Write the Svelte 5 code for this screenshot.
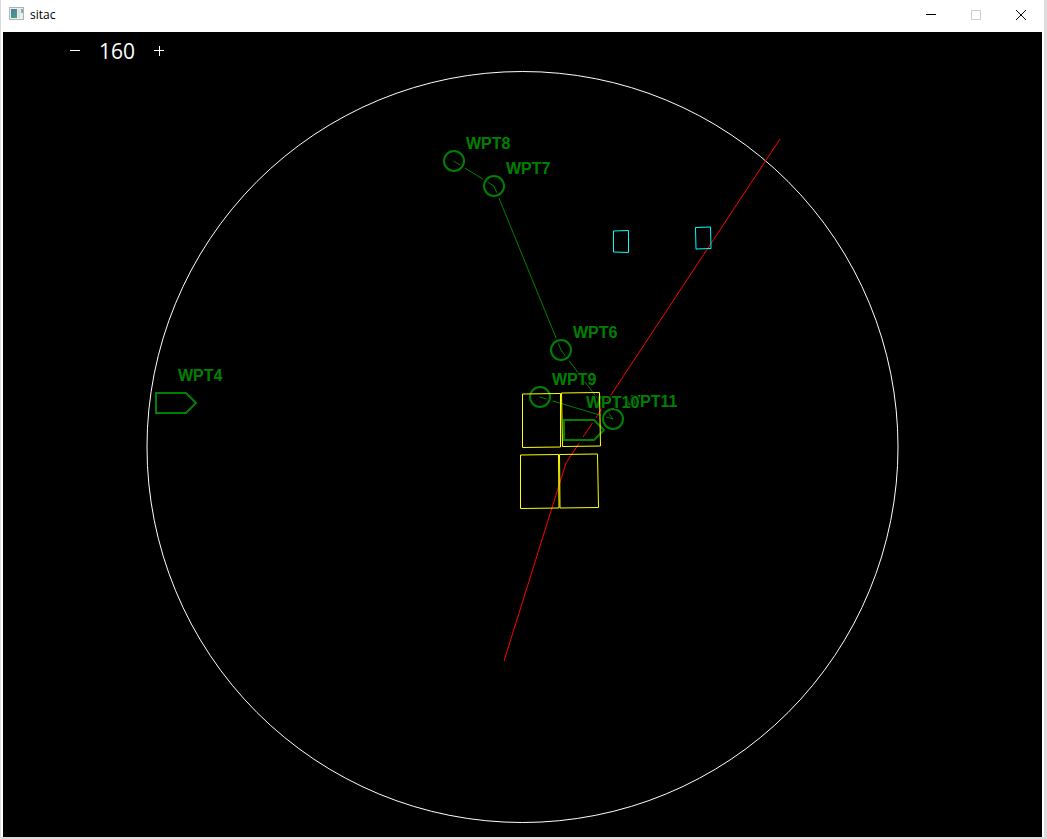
<script lang="ts">
  type Point = [number, number];

  let range = $state(160);

  const route: Point[][] = [
    [[450.5, 129], [491, 154], [558, 318], [610, 387]],
    [[536.5, 365], [610, 387]]
  ];

  const border: Point[] = [[777, 107], [563, 431], [501, 629]];

  const fixes = [
    { name: 'WPT8', x: 451, y: 129 },
    { name: 'WPT7', x: 491, y: 154 },
    { name: 'WPT6', x: 558, y: 318 },
    { name: 'WPT9', x: 537, y: 365 },
    { name: 'WPT11', x: 610, y: 387 }
  ];

  const bases = [
    { name: 'WPT4', x: 163, y: 371 },
    { name: 'WPT10', x: 571, y: 398 }
  ];

  const zones: { kind: string; corners: Point[] }[] = [
    { kind: 'cap', corners: [[519.5, 362], [557.5, 361.5], [557.5, 415], [519.5, 415.5]] },
    { kind: 'cap', corners: [[558.5, 361], [596.5, 360.5], [597.5, 414], [559.5, 414.5]] },
    { kind: 'cap', corners: [[517.5, 423], [555.5, 422.5], [556, 476], [517.5, 476.5]] },
    { kind: 'cap', corners: [[556.5, 422.5], [594.5, 422], [595.5, 475.5], [557, 476]] },
    { kind: 'sam', corners: [[610.5, 199], [625.5, 198.5], [625.5, 220.5], [610.5, 220]] },
    { kind: 'sam', corners: [[692.5, 195.5], [707.5, 195], [708, 216.5], [693, 217]] }
  ];

  const pentagon = '-10,-10 20,-10 30,0 20,10 -10,10';

  function toPoints(list: Point[]) {
    return list.map((p) => p.join(',')).join(' ');
  }
</script>

<div class="window">
  <header class="titlebar">
    <svg class="app-icon" viewBox="0 0 16 16" aria-hidden="true">
      <defs>
        <linearGradient id="screen" x1="0" y1="0" x2="1" y2="1">
          <stop offset="0" stop-color="#4679ae" />
          <stop offset="1" stop-color="#4ba36f" />
        </linearGradient>
      </defs>
      <rect x=".5" y=".5" width="14" height="12" fill="#eceef0" stroke="#aeb3ba" />
      <rect x="2" y="2" width="6" height="9" fill="url(#screen)" />
      <rect x="9" y="2" width="2" height="9" fill="#dcdfe2" />
      <rect x="12" y="2" width="2" height="4" fill="#80afa8" />
    </svg>
    <h1>sitac</h1>
    <div class="caption-buttons">
      <button aria-label="Minimize">
        <svg viewBox="0 0 10 10"><path d="M0 4.5H10" /></svg>
      </button>
      <button aria-label="Maximize" disabled>
        <svg viewBox="0 0 10 10"><path d="M.5 .5H9.5V9.5H.5Z" /></svg>
      </button>
      <button aria-label="Close">
        <svg viewBox="0 0 10 10"><path d="M0 0L10 10M10 0L0 10" /></svg>
      </button>
    </div>
  </header>

  <main>
    <div class="range">
      <button aria-label="Decrease range" onclick={() => (range = Math.max(10, range / 2))}>
        <svg viewBox="0 0 11 11"><path d="M0 4.5H10" /></svg>
      </button>
      <output>{range}</output>
      <button aria-label="Increase range" onclick={() => (range = range * 2)}>
        <svg viewBox="0 0 11 11"><path d="M0 4.5H10M5.5 0V10" /></svg>
      </button>
    </div>

    <svg class="map" viewBox="0 0 1039 805" role="img" aria-label="Tactical situation">
      <circle class="scope" cx="519.5" cy="415" r="375.5" />
      <polyline class="border" points={toPoints(border)} />
      {#each route as leg}
        <polyline class="leg" points={toPoints(leg)} />
      {/each}

      {#each bases as base (base.name)}
        <g transform="translate({base.x} {base.y})">
          <polygon class="halo" points={pentagon} />
          <polygon class="symbol" points={pentagon} />
        </g>
      {/each}
      {#each fixes as fix (fix.name)}
        <g transform="translate({fix.x} {fix.y})">
          <circle class="halo" r="10" />
          <circle class="symbol" r="10" />
          <text x="12" y="-12">{fix.name}</text>
        </g>
      {/each}
      {#each bases as base (base.name)}
        <text x={base.x + 12} y={base.y - 22}>{base.name}</text>
      {/each}

      {#each zones as zone}
        <polygon class="zone {zone.kind}" points={toPoints(zone.corners)} />
      {/each}
    </svg>
  </main>
</div>

<style>
  :global(body) {
    margin: 0;
    background: #dcdcdc;
  }

  .window {
    box-sizing: border-box;
    display: flex;
    flex-direction: column;
    min-height: 100vh;
    margin: 0 3px 0 1px;
    padding: 0 2px 2px;
    background: linear-gradient(#fff, #fff) no-repeat 0 0 / 100% calc(100% - 2px);
    font-family: "Open Sans", "Noto Sans", sans-serif;
  }

  .titlebar {
    display: flex;
    align-items: center;
    height: 32px;
    padding-left: 6px;
  }

  .app-icon {
    width: 16px;
    height: 16px;
  }

  h1 {
    flex: 1;
    margin: 0 0 0 5px;
    font-size: 12px;
    font-weight: 400;
    line-height: 28px;
    color: #000;
  }

  .titlebar .app-icon,
  h1,
  .caption-buttons {
    margin-bottom: 3px;
  }

  .caption-buttons {
    display: flex;
    margin-right: -1px;
  }

  button {
    display: grid;
    place-items: center;
    padding: 0;
    border: 0;
    background: none;
    color: inherit;
  }

  button path {
    fill: none;
    stroke: currentColor;
    stroke-width: 1;
  }

  .caption-buttons button {
    width: 45px;
    height: 28px;
    color: #000;
  }

  .caption-buttons button:disabled {
    color: #ccc;
  }

  .caption-buttons svg {
    width: 10px;
    height: 10px;
  }

  main {
    display: grid;
    flex: 1;
    background: #000;
    color: #fff;
  }

  .range,
  .map {
    grid-area: 1 / 1;
  }

  .range {
    z-index: 1;
    display: flex;
    align-items: center;
    align-self: start;
    justify-self: start;
    gap: 12px;
    padding: 4px 0 0 60px;
  }

  .range button {
    width: 24px;
    height: 24px;
  }

  .range svg {
    width: 11px;
    height: 11px;
  }

  output {
    font-size: 21px;
    line-height: 30px;
  }

  .map {
    display: block;
    width: 100%;
    height: 100%;
  }

  .map polyline,
  .map polygon,
  .map circle {
    fill: none;
  }

  .scope {
    stroke: #fff;
  }

  .border {
    stroke: #f00;
  }

  .leg {
    stroke: #008000;
  }

  .halo {
    stroke: #000;
    stroke-width: 6;
  }

  .symbol {
    stroke: #008000;
    stroke-width: 2;
  }

  .cap {
    stroke: #ff0;
  }

  .sam {
    stroke: #0ff;
  }

  text {
    fill: #008000;
    stroke: #000;
    stroke-width: 2;
    paint-order: stroke;
    font-family: "Liberation Sans", Arial, sans-serif;
    font-size: 16px;
    font-weight: 700;
  }
</style>
